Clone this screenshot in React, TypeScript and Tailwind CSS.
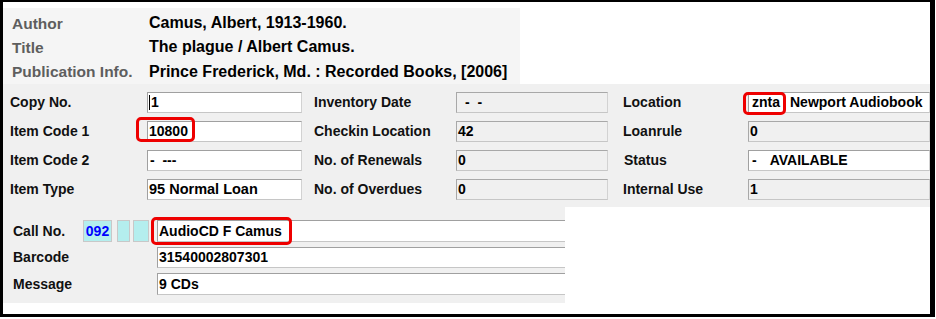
import React from "react";

const inWhite =
  "h-full bg-white border border-t-[#a0a0a0] border-l-[#a0a0a0] border-r-[#d2d2d2] border-b-[#c6c6c6] flex items-center text-[14px] font-bold text-black whitespace-nowrap overflow-hidden";
const inGray =
  "h-full bg-[#f0f0f0] border border-t-[#a8a8a8] border-l-[#a8a8a8] border-r-[#d2d2d2] border-b-[#c6c6c6] flex items-center text-[14px] font-bold text-black whitespace-nowrap overflow-hidden";

function Row({ children }: { children: React.ReactNode }) {
  return <div className="flex h-[21px] items-center">{children}</div>;
}

export default function App() {
  return (
    <div className="relative w-[936px] h-[319px] bg-white font-['Liberation_Sans',Arial,sans-serif]">
      <div className="w-[935px] h-[317px] border-l-[3px] border-t-[2px] border-b-[3px] border-r-[5px] border-black bg-white flex flex-col overflow-hidden">
        {/* top bibliographic section */}
        <div className="mt-[6px] w-[517px] h-[76px] bg-[#f5f5f5] pt-[3px] pl-[9px] flex flex-col font-bold">
          <div className="flex h-[25px] items-center">
            <div className="w-[137px] text-[15.5px] text-[#5e5e5e]">Author</div>
            <div className="text-[16px] text-black whitespace-nowrap">Camus, Albert, 1913-1960.</div>
          </div>
          <div className="flex h-[25px] items-center">
            <div className="w-[137px] text-[15.5px] text-[#5e5e5e]">Title</div>
            <div className="text-[16px] text-black whitespace-nowrap">The plague / Albert Camus.</div>
          </div>
          <div className="flex h-[25px] items-center">
            <div className="w-[137px] text-[15.5px] text-[#5e5e5e] whitespace-nowrap">Publication Info.</div>
            <div className="text-[16px] text-black whitespace-nowrap">Prince Frederick, Md. : Recorded Books, [2006]</div>
          </div>
        </div>

        {/* main item section */}
        <div className="h-[123px] bg-[#f0f0f0] pt-[8px] pl-[7px] flex flex-col gap-[8px] overflow-hidden">
          <Row>
            <div className="w-[137px] text-[14px] font-bold text-[#111]">Copy No.</div>
            <div className={`w-[155px] pl-[1px] ${inWhite}`}>
              <span className="inline-block w-[1px] h-[15px] bg-black mr-[1px]"></span>1
            </div>
            <div className="ml-[12px] w-[142px] text-[14px] font-bold text-[#111]">Inventory Date</div>
            <div className={`w-[152px] pl-[8px] ${inGray}`}>-&nbsp;&nbsp;-</div>
            <div className="ml-[15px] w-[125px] text-[14px] font-bold text-[#111]">Location</div>
            <div className={`flex-1 pl-[3px] ${inWhite}`}>
              <span>znta</span>
              <span className="ml-[10px]">Newport Audiobook</span>
            </div>
          </Row>
          <Row>
            <div className="w-[137px] text-[14px] font-bold text-[#111]">Item Code 1</div>
            <div className={`w-[155px] pl-[1px] ${inWhite}`}>10800</div>
            <div className="ml-[12px] w-[142px] text-[14px] font-bold text-[#111]">Checkin Location</div>
            <div className={`w-[152px] pl-[1px] ${inGray}`}>42</div>
            <div className="ml-[15px] w-[125px] text-[14px] font-bold text-[#111]">Loanrule</div>
            <div className={`flex-1 pl-[1px] ${inGray}`}>0</div>
          </Row>
          <Row>
            <div className="w-[137px] text-[14px] font-bold text-[#111]">Item Code 2</div>
            <div className={`w-[155px] pl-[2px] ${inWhite}`}>-&nbsp;&nbsp;---</div>
            <div className="ml-[12px] w-[142px] text-[14px] font-bold text-[#111]">No. of Renewals</div>
            <div className={`w-[152px] pl-[1px] ${inGray}`}>0</div>
            <div className="ml-[15px] w-[125px] pl-[1px] text-[14px] font-bold text-[#111]">Status</div>
            <div className={`flex-1 pl-[3px] ${inWhite}`}>
              <span>-</span>
              <span className="ml-[13px]">AVAILABLE</span>
            </div>
          </Row>
          <Row>
            <div className="w-[137px] text-[14px] font-bold text-[#111]">Item Type</div>
            <div className={`w-[155px] pl-[1px] ${inWhite}`}>
              <span className="text-[14.5px]">95 Normal Loan</span>
            </div>
            <div className="ml-[12px] w-[142px] text-[14px] font-bold text-[#111]">No. of Overdues</div>
            <div className={`w-[152px] pl-[1px] ${inGray}`}>0</div>
            <div className="ml-[15px] w-[125px] text-[14px] font-bold text-[#111]">Internal Use</div>
            <div className={`flex-1 pl-[1px] ${inGray}`}>1</div>
          </Row>
        </div>

        {/* call number section */}
        <div className="w-[562px] h-[96px] bg-[#f0f0f0] pt-[13px] pl-[10px] flex flex-col gap-[5px] overflow-hidden">
          <div className="flex h-[22px] items-center">
            <div className="w-[70px] text-[14px] font-bold text-[#111]">Call No.</div>
            <div className="w-[29px] h-full bg-[#b4eeee] border border-[#c8c8c8] flex items-center justify-center text-[14px] font-bold text-[#0000ff]">
              092
            </div>
            <div className="ml-[5px] w-[13px] h-full bg-[#b4eeee] border border-[#c8c8c8]"></div>
            <div className="ml-[3px] w-[16px] h-full bg-[#b4eeee] border border-[#c8c8c8]"></div>
            <div className={`ml-[8px] flex-1 -mr-[4px] pl-[1px] ${inWhite}`}>AudioCD F Camus</div>
          </div>
          <div className="flex h-[21px] items-center">
            <div className="w-[144px] text-[14px] font-bold text-[#111]">Barcode</div>
            <div className={`flex-1 -mr-[4px] pl-[1px] ${inWhite}`}>31540002807301</div>
          </div>
          <div className="flex h-[22px] items-center">
            <div className="w-[144px] text-[14px] font-bold text-[#111]">Message</div>
            <div className={`flex-1 -mr-[4px] pl-[1px] ${inWhite}`}>9 CDs</div>
          </div>
        </div>
      </div>

      {/* red highlight annotations */}
      <div className="absolute left-[136px] top-[117px] w-[59px] h-[25px] border-[3px] border-[#ee0000] rounded-[5px]"></div>
      <div className="absolute left-[743px] top-[92px] w-[43px] h-[23px] border-[3px] border-[#ee0000] rounded-[5px]"></div>
      <div className="absolute left-[151px] top-[217px] w-[141px] h-[28px] border-[3px] border-[#ee0000] rounded-[5px]"></div>
    </div>
  );
}
